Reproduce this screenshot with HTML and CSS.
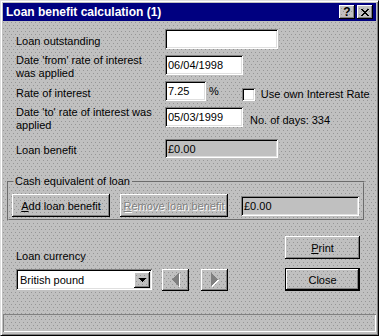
FILE: index.html
```
<!DOCTYPE html>
<html lang="en">
<head>
  <meta charset="UTF-8" />
  <title>Loan benefit calculation</title>
  <link rel="stylesheet" href="styles.css">
</head>
<body>
<div class="window dots">
  <div class="titlebar">
    <span class="title">Loan benefit calculation (1)</span>
    <div class="title-buttons">
      <span class="tbtn dots help">?</span>
      <span class="tbtn dots">
        <svg width="8" height="7" viewBox="0 0 8 7" shape-rendering="crispEdges"><path d="M0 0h2v1H0zM6 0h2v1H6zM1 1h2v1H1zM5 1h2v1H5zM2 2h4v1H2zM3 3h2v1H3zM2 4h4v1H2zM1 5h2v1H1zM5 5h2v1H5zM0 6h2v1H0zM6 6h2v1H6z" fill="#000"/></svg>
      </span>
    </div>
  </div>

  <div class="content">
    <div class="form">
      <div class="row">
        <span class="lbl">Loan outstanding</span>
        <input class="field w113" type="text" value="">
      </div>
      <div class="row">
        <span class="lbl">Date 'from' rate of interest was applied</span>
        <input class="field w78" type="text" value="06/04/1998">
      </div>
      <div class="row">
        <span class="lbl">Rate of interest</span>
        <input class="field w41" type="text" value="7.25">
        <span class="pct">%</span>
        <span class="check"></span>
        <span class="check-lbl">Use own Interest Rate</span>
      </div>
      <div class="row">
        <span class="lbl">Date 'to' rate of interest was applied</span>
        <input class="field w78" type="text" value="05/03/1999">
        <span class="days">No. of days: 334</span>
      </div>
      <div class="row row-gap">
        <span class="lbl">Loan benefit</span>
        <div class="field readonly dots w113 h19">£0.00</div>
      </div>
    </div>

    <fieldset class="group">
      <legend>Cash equivalent of loan</legend>
      <div class="group-row">
        <button class="btn dots add"><u>A</u>dd loan benefit</button>
        <button class="btn dots remove" disabled><u>R</u>emove loan benefit</button>
        <div class="field readonly dots cash">£0.00</div>
      </div>
    </fieldset>

    <div class="bottom">
      <div class="currency">
        <span class="cur-lbl">Loan currency</span>
        <div class="cur-row">
          <div class="select">
            <span class="sel-text">British pound</span>
            <span class="drop dots">
              <svg width="7" height="4" viewBox="0 0 7 4" shape-rendering="crispEdges"><path d="M0 0h7v1H0zM1 1h5v1H1zM2 2h3v1H2zM3 3h1v1H3z" fill="#000"/></svg>
            </span>
          </div>
          <span class="btn dots arrow left">
            <svg width="8" height="14" viewBox="0 0 8 14" shape-rendering="crispEdges">
              <path d="M1 7h1v1H1zM2 6h1v3H2zM3 5h1v5H3zM4 4h1v7H4zM5 3h1v9H5zM6 2h1v11H6zM7 1h1v13H7z" fill="#fff"/>
              <path d="M0 6h1v1H0zM1 5h1v3H1zM2 4h1v5H2zM3 3h1v7H3zM4 2h1v9H4zM5 1h1v11H5zM6 0h1v13H6z" fill="#808080"/>
            </svg>
          </span>
          <span class="btn dots arrow right">
            <svg width="8" height="14" viewBox="0 0 8 14" shape-rendering="crispEdges">
              <path d="M1 1h1v13H1zM2 2h1v11H2zM3 3h1v9H3zM4 4h1v7H4zM5 5h1v5H5zM6 6h1v3H6zM7 7h1v1H7z" fill="#fff"/>
              <path d="M0 0h1v13H0zM1 1h1v11H1zM2 2h1v9H2zM3 3h1v7H3zM4 4h1v5H4zM5 5h1v3H5zM6 6h1v1H6z" fill="#808080"/>
            </svg>
          </span>
        </div>
      </div>
      <div class="actions">
        <button class="btn dots"><u>P</u>rint</button>
        <button class="btn dots default">Close</button>
      </div>
    </div>
  </div>

  <div class="statusbar"></div>
</div>
</body>
</html>
```

FILE: styles.css
```
body {
  margin: 0;
  font-family: 'Liberation Sans', Arial, sans-serif;
  font-size: 11px;
  color: #000;
}
.dots {
  background-color: #c0c0c0;
  background-image:
    conic-gradient(at 1px 1px, transparent 75%, #969696 0),
    conic-gradient(at 1px 1px, transparent 75%, #969696 0);
  background-size: 4px 6px;
  background-position: 0 0, 2px 3px;
}
.window {
  width: 379px;
  height: 336px;
  box-sizing: border-box;
  border: 1px solid;
  border-color: #dfdfdf #000 #000 #dfdfdf;
  box-shadow: inset 1px 1px #fff, inset -1px -1px #808080;
  padding: 2px;
  display: flex;
  flex-direction: column;
}
.titlebar {
  height: 18px;
  background: #000080;
  color: #fff;
  display: flex;
  align-items: center;
  justify-content: space-between;
  padding: 0 3px;
}
.title {
  font-weight: 700;
  font-size: 12px;
}
.title-buttons {
  display: flex;
  gap: 2px;
}
.tbtn {
  width: 16px;
  height: 14px;
  box-sizing: border-box;
  display: flex;
  align-items: center;
  justify-content: center;
  box-shadow: inset -1px -1px #000, inset 1px 1px #fff, inset -2px -2px #808080;
  color: #000;
}
.help {
  font-weight: 700;
  font-size: 12px;
}
.content {
  flex: 1;
  padding: 0 0 0 4px;
}
.form {
  display: flex;
  flex-direction: column;
  gap: 6px;
  margin-top: 8px;
  padding-left: 9px;
}
.row {
  display: flex;
  align-items: center;
  height: 20px;
}
.row-gap {
  margin-top: 6px;
  height: 19px;
}
.lbl {
  width: 149px;
  flex: none;
  line-height: 13px;
  padding-top: 4px;
  padding-right: 4px;
  box-sizing: border-box;
}
.field {
  height: 20px;
  box-sizing: border-box;
  border: none;
  outline: none;
  margin: 0;
  padding: 0 3px;
  font: inherit;
  background: #fff;
  box-shadow: inset 1px 1px #808080, inset -1px -1px #fff, inset 2px 2px #000, inset -2px -2px #dfdfdf;
  display: flex;
  align-items: center;
}
.readonly {
  background-color: #c0c0c0;
}
.w113 { width: 113px; }
.w78 { width: 78px; }
.w41 { width: 41px; }
.h19 { height: 19px; }
.pct {
  margin-left: 3px;
}
.check {
  width: 13px;
  height: 13px;
  margin-left: 23px;
  margin-top: 7px;
  background: #fff;
  box-shadow: inset 1px 1px #808080, inset -1px -1px #fff, inset 2px 2px #000, inset -2px -2px #dfdfdf;
}
.check-lbl {
  margin-left: 6px;
  margin-top: 6px;
}
.days {
  margin-left: 7px;
  margin-top: 5px;
}
.group {
  width: 358px;
  box-sizing: border-box;
  margin: 17px 0 0 0;
  padding: 6px 3px 2px 3px;
  border: 2px groove #c0c0c0;
  min-width: 0;
}
.group legend {
  padding: 0 2px;
  margin-left: 1px;
  line-height: 13px;
}
.group-row {
  display: flex;
  align-items: center;
}
.btn {
  font: inherit;
  color: #000;
  height: 23px;
  box-sizing: border-box;
  border: none;
  padding: 0;
  box-shadow: inset -1px -1px #000, inset 1px 1px #fff, inset -2px -2px #808080;
  display: flex;
  align-items: center;
  justify-content: center;
}
.btn u {
  text-decoration: underline;
}
.add {
  width: 98px;
}
.remove {
  width: 108px;
  margin-left: 10px;
  color: #808080;
  text-shadow: 1px 1px #fff;
}
.cash {
  width: 118px;
  margin-left: 13px;
}
.bottom {
  display: flex;
  align-items: flex-end;
  margin-top: 15px;
}
.currency {
  margin-left: 9px;
  display: flex;
  flex-direction: column;
}
.cur-lbl {
  line-height: 13px;
  margin-bottom: 6px;
}
.cur-row {
  display: flex;
  align-items: flex-start;
}
.select {
  width: 136px;
  height: 21px;
  box-sizing: border-box;
  background: #fff;
  box-shadow: inset 1px 1px #808080, inset -1px -1px #fff, inset 2px 2px #000, inset -2px -2px #dfdfdf;
  display: flex;
  align-items: center;
  justify-content: space-between;
  padding: 2px;
}
.sel-text {
  padding-left: 2px;
}
.drop {
  width: 16px;
  height: 16px;
  box-sizing: border-box;
  display: flex;
  align-items: center;
  justify-content: center;
  box-shadow: inset -1px -1px #000, inset 1px 1px #fff, inset -2px -2px #808080;
}
.arrow {
  width: 27px;
  height: 22px;
}
.left {
  margin-left: 10px;
}
.right {
  margin-left: 12px;
}
.actions {
  margin-left: auto;
  margin-right: 16px;
  display: flex;
  flex-direction: column;
  gap: 9px;
}
.actions .btn {
  width: 75px;
}
.default {
  box-shadow: inset 0 0 0 1px #000, inset -2px -2px #000, inset 2px 2px #fff, inset -3px -3px #808080;
}
.statusbar {
  height: 18px;
  box-sizing: border-box;
  box-shadow: inset 1px 1px #808080, inset -1px -1px #fff;
  margin-bottom: 1px;
}
```
